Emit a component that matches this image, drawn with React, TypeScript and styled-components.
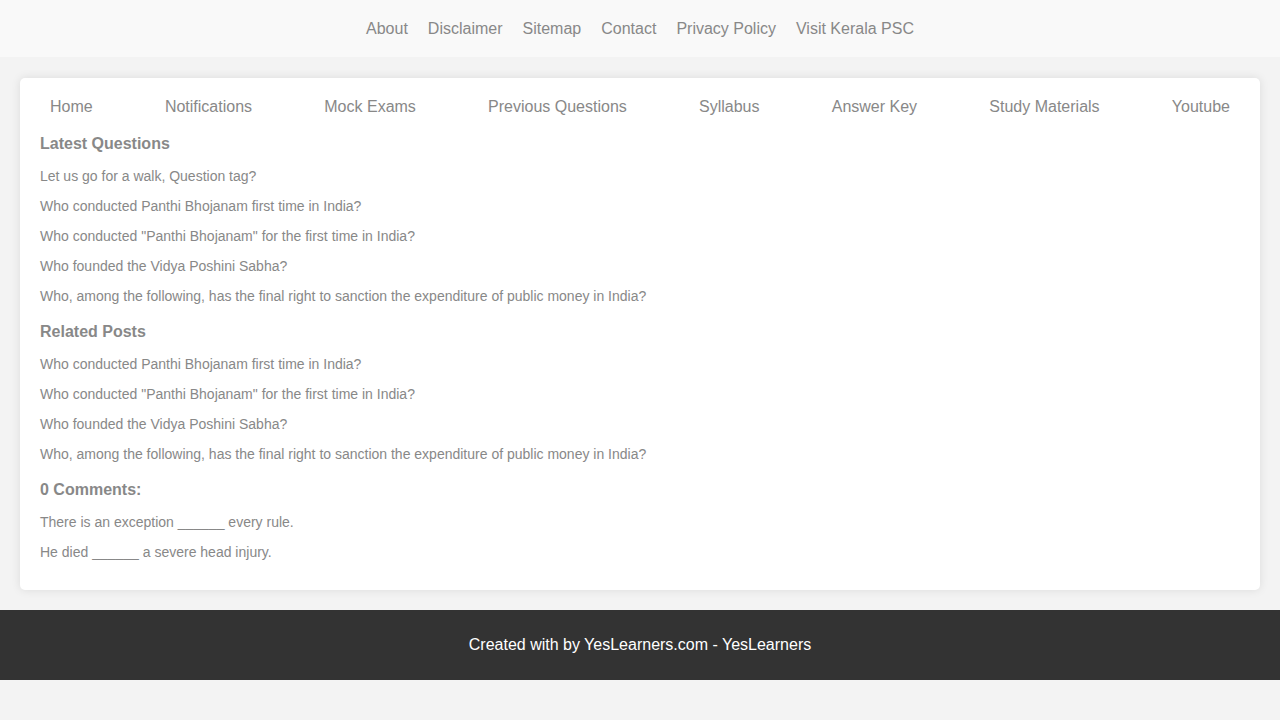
import React from "react";
import styled, { createGlobalStyle } from "styled-components";

const GlobalStyle = createGlobalStyle`
  html, body { margin: 0; padding: 0; background: #f3f3f3; }
  body { font-family: "Liberation Sans", Arial, sans-serif; }
  * { box-sizing: border-box; }
`;

const TopBar = styled.header`
  height: 57px;
  background: #f9f9f9;
  display: flex;
  justify-content: center;
  align-items: center;
  gap: 20px;
`;

const TopLink = styled.a`
  color: #888;
  font-size: 16px;
  line-height: 18px;
  text-decoration: none;
`;

const Main = styled.main`
  padding: 21px 20px 20px;
`;

const Card = styled.div`
  background: #fff;
  border-radius: 5px;
  box-shadow: 0 0 10px rgba(0, 0, 0, 0.1);
  padding: 10px 20px 28px;
`;

const Nav = styled.nav`
  display: flex;
  justify-content: space-between;
`;

const NavLink = styled.a`
  color: #888;
  font-size: 16px;
  line-height: 18px;
  padding: 10px;
  text-decoration: none;
`;

const Section = styled.section<{ $top: number }>`
  margin-top: ${(p) => p.$top}px;
`;

const Heading = styled.h3`
  margin: 0 0 13px;
  font-size: 16px;
  line-height: 18px;
  font-weight: bold;
  color: #888;
`;

const List = styled.ul`
  list-style: none;
  margin: 0;
  padding: 0;
  display: flex;
  flex-direction: column;
  gap: 10px;
`;

const Item = styled.li`
  font-size: 14px;
  line-height: 20px;
  color: #888;
`;

const Footer = styled.footer`
  background: #333;
  color: #fff;
  height: 70px;
  display: flex;
  justify-content: center;
  align-items: center;
  font-size: 16px;
`;

const topLinks = ["About", "Disclaimer", "Sitemap", "Contact", "Privacy Policy", "Visit Kerala PSC"];
const navLinks = [
  "Home",
  "Notifications",
  "Mock Exams",
  "Previous Questions",
  "Syllabus",
  "Answer Key",
  "Study Materials",
  "Youtube",
];

const sections = [
  {
    title: "Latest Questions",
    top: 9,
    items: [
      "Let us go for a walk, Question tag?",
      "Who conducted Panthi Bhojanam first time in India?",
      'Who conducted "Panthi Bhojanam" for the first time in India?',
      "Who founded the Vidya Poshini Sabha?",
      "Who, among the following, has the final right to sanction the expenditure of public money in India?",
    ],
  },
  {
    title: "Related Posts",
    top: 17,
    items: [
      "Who conducted Panthi Bhojanam first time in India?",
      'Who conducted "Panthi Bhojanam" for the first time in India?',
      "Who founded the Vidya Poshini Sabha?",
      "Who, among the following, has the final right to sanction the expenditure of public money in India?",
    ],
  },
  {
    title: "0 Comments:",
    top: 17,
    items: ["There is an exception ______ every rule.", "He died ______ a severe head injury."],
  },
];

export default function App() {
  return (
    <>
      <GlobalStyle />
      <TopBar>
        {topLinks.map((l) => (
          <TopLink key={l} href="#">
            {l}
          </TopLink>
        ))}
      </TopBar>
      <Main>
        <Card>
          <Nav>
            {navLinks.map((l) => (
              <NavLink key={l} href="#">
                {l}
              </NavLink>
            ))}
          </Nav>
          {sections.map((s) => (
            <Section key={s.title} $top={s.top}>
              <Heading>{s.title}</Heading>
              <List>
                {s.items.map((it, i) => (
                  <Item key={i}>{it}</Item>
                ))}
              </List>
            </Section>
          ))}
        </Card>
      </Main>
      <Footer>Created with by YesLearners.com - YesLearners</Footer>
    </>
  );
}
